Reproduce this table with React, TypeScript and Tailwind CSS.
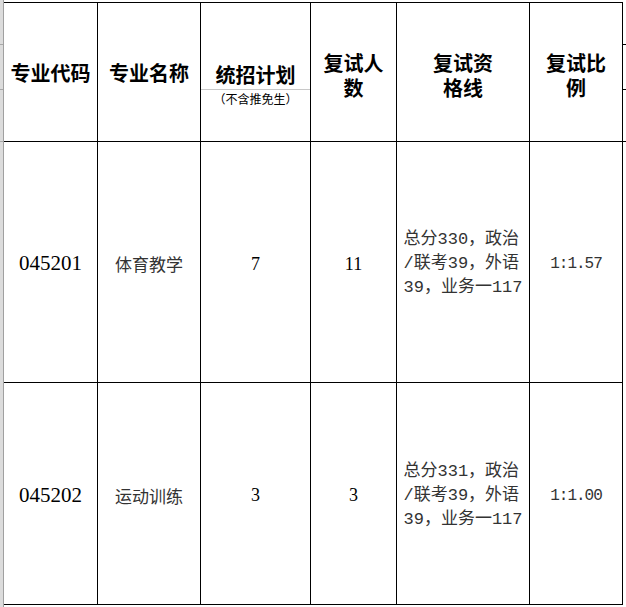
const cjk = "font-['Noto_Sans_CJK_SC',sans-serif]";
const serif = "font-['Liberation_Serif','Noto_Sans_CJK_SC',serif]";
const mono = "font-['Liberation_Mono','Noto_Sans_CJK_SC',monospace]";

const rows = [
  {
    code: "045201",
    name: "体育教学",
    plan: "7",
    count: "11",
    line: ["总分330，政治", "/联考39，外语", "39，业务一117"],
    ratio: "1:1.57",
    height: "h-[241px]",
  },
  {
    code: "045202",
    name: "运动训练",
    plan: "3",
    count: "3",
    line: ["总分331，政治", "/联考39，外语", "39，业务一117"],
    ratio: "1:1.00",
    height: "h-[222px]",
  },
];

const cell = "flex items-center justify-center border-r border-b border-black";

function HeaderCell({ lines }: { lines: string[] }) {
  return (
    <div className={`${cell} pt-[5px]`}>
      <div className={`${cjk} text-center text-[20px] font-bold leading-[25px] text-black`}>
        {lines.map((l) => (
          <div key={l}>{l}</div>
        ))}
      </div>
    </div>
  );
}

export default function App() {
  return (
    <div className="flex h-[607px] w-[626px] bg-white">
      <div className="relative h-full w-[3px] bg-[#dcdcdc]">
        <div className="absolute left-0 top-[44px] h-px w-[3px] bg-[#a8a8a8]" />
        <div className="absolute left-0 top-[89px] h-px w-[3px] bg-[#a8a8a8]" />
        <div className="absolute left-0 top-[141px] h-px w-[3px] bg-[#a8a8a8]" />
      </div>
      <div className="h-full w-px bg-[#a0a0a0]" />
      <div className="pt-[2px]">
        <div className="grid grid-cols-[94px_103px_110px_86px_133px_93px] border-t border-black">
          <div className="contents">
            <div className={`${cell} h-[139px] pt-[2px]`}>
              <span className={`${cjk} text-[20px] font-bold text-black`}>专业代码</span>
            </div>
            <div className={`${cell} pt-[2px]`}>
              <span className={`${cjk} text-[20px] font-bold text-black`}>专业名称</span>
            </div>
            <div className="flex flex-col border-r border-b border-black">
              <div className="flex h-[86px] items-end justify-center pb-[1px]">
                <span className={`${cjk} text-[20px] font-bold leading-[26px] text-black`}>统招计划</span>
              </div>
              <div className="h-px bg-[#c8c8c8]" />
              <div className="flex justify-center pt-[1px]">
                <span className={`${cjk} text-[12px] leading-[16px] text-black`}>（不含推免生）</span>
              </div>
            </div>
            <HeaderCell lines={["复试人", "数"]} />
            <HeaderCell lines={["复试资", "格线"]} />
            <HeaderCell lines={["复试比", "例"]} />
          </div>
          {rows.map((r) => (
            <div className="contents" key={r.code}>
              <div className={`${cell} ${r.height} pt-[4px]`}>
                <span className={`${serif} text-[21px] text-black`}>{r.code}</span>
              </div>
              <div className={`${cell} pt-[4px]`}>
                <span className={`${cjk} text-[17px] text-[#333]`}>{r.name}</span>
              </div>
              <div className={`${cell} pt-[4px]`}>
                <span className={`${serif} text-[18px] text-black`}>{r.plan}</span>
              </div>
              <div className={`${cell} pt-[4px]`}>
                <span className={`${serif} text-[18px] text-black`}>{r.count}</span>
              </div>
              <div className={`${cell} pt-[4px]`}>
                <div className={`${mono} text-left text-[17px] leading-[24px] text-[#333]`}>
                  {r.line.map((l) => (
                    <div key={l} className="whitespace-nowrap">
                      {l}
                    </div>
                  ))}
                </div>
              </div>
              <div className={`${cell} pt-[4px]`}>
                <span className={`${mono} text-[16px] tracking-[-1px] text-[#333]`}>{r.ratio}</span>
              </div>
            </div>
          ))}
        </div>
      </div>
      <div className="relative h-full w-[3px]">
        <div className="absolute left-0 top-[44px] h-px w-[3px] bg-black" />
        <div className="absolute left-0 top-[89px] h-px w-[3px] bg-black" />
        <div className="absolute left-0 top-[141px] h-px w-[3px] bg-black" />
      </div>
    </div>
  );
}
